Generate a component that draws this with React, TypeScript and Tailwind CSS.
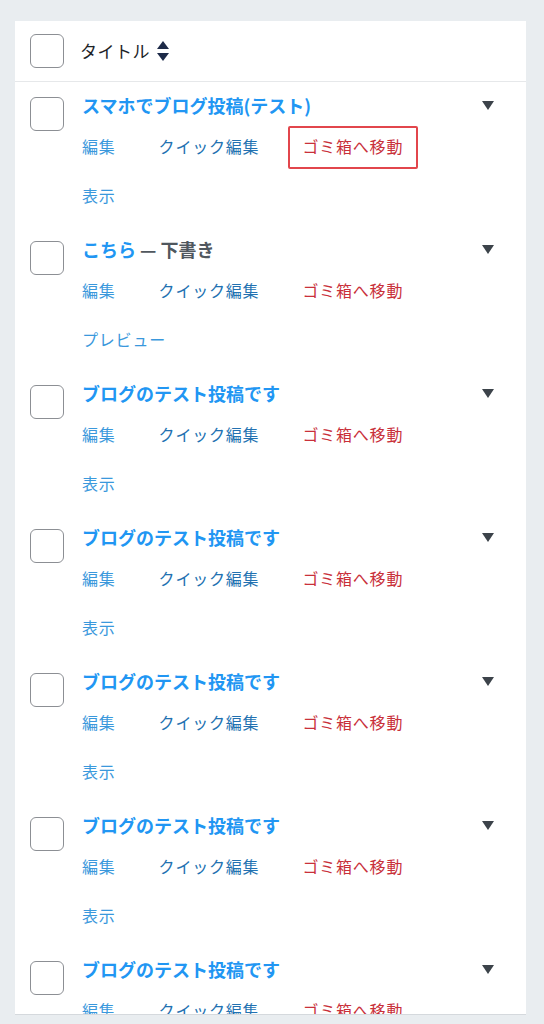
import React from "react";

type Post = {
  title: string;
  draft?: boolean;
  second: string;
  highlight?: boolean;
};

const posts: Post[] = [
  { title: "スマホでブログ投稿(テスト)", second: "表示", highlight: true },
  { title: "こちら", draft: true, second: "プレビュー" },
  { title: "ブログのテスト投稿です", second: "表示" },
  { title: "ブログのテスト投稿です", second: "表示" },
  { title: "ブログのテスト投稿です", second: "表示" },
  { title: "ブログのテスト投稿です", second: "表示" },
  { title: "ブログのテスト投稿です", second: "表示" },
];

function Checkbox() {
  return <div className="w-[34px] h-[34px] shrink-0 rounded-[6px] border-[1.5px] border-[#8c8f94] bg-white" />;
}

function SortIcon() {
  return (
    <svg width="14" height="22" viewBox="0 0 14 22" className="ml-[6px]">
      <path d="M7 1 L13 9 L1 9 Z" fill="#1d2a48" />
      <path d="M1 13 L13 13 L7 21 Z" fill="#1d2a48" />
    </svg>
  );
}

function Row({ post }: { post: Post }) {
  return (
    <div className="flex px-[15px] pt-[10px] pb-[18px]">
      <div className="pt-[5px]">
        <Checkbox />
      </div>
      <div className="flex-1 pl-[18px]">
        <div className="flex items-center h-[26px]">
          <div className="flex-1 text-[18px] font-bold leading-[26px]">
            <span className="text-[#2196f3]">{post.title}</span>
            {post.draft && <span className="text-[#50575e]"> — 下書き</span>}
          </div>
          <svg width="12" height="9" viewBox="0 0 12 9" className="mr-[17px]">
            <path d="M0 0 L12 0 L6 9 Z" fill="#3c434a" />
          </svg>
        </div>
        <div className="flex items-center gap-[43px] h-[26px] mt-[15px] text-[16px] tracking-[0.8px] leading-[26px]">
          <span className="text-[#3a98dc]">編集</span>
          <span className="text-[#2271b1]">クイック編集</span>
          <span className="relative text-[#c9303a]">
            ゴミ箱へ移動
            {post.highlight && (
              <span className="absolute left-[-14px] right-[-15px] top-[-7px] bottom-[-10px] border-2 border-[#e2464c] rounded-[2px]" />
            )}
          </span>
        </div>
        <div className="h-[26px] mt-[23px] text-[16px] tracking-[0.8px] leading-[26px] text-[#3a98dc]">
          {post.second}
        </div>
      </div>
    </div>
  );
}

export default function App() {
  return (
    <div
      className="w-[544px] h-[1024px] overflow-hidden bg-[#e9edf0] pt-[21px] pl-[15px] pr-[18px]"
      style={{ fontFamily: '"Noto Sans CJK JP", "Noto Sans", sans-serif' }}
    >
      <div className="h-[994px] overflow-hidden bg-white border-b border-[#d5d9dd]">
        <div className="flex items-center h-[61px] px-[15px] border-b border-[#e6e8ea]">
          <Checkbox />
          <span className="ml-[16px] text-[17px] tracking-[0.5px] text-[#1d2327]">タイトル</span>
          <SortIcon />
        </div>
        {posts.map((p, i) => (
          <Row key={i} post={p} />
        ))}
      </div>
    </div>
  );
}
